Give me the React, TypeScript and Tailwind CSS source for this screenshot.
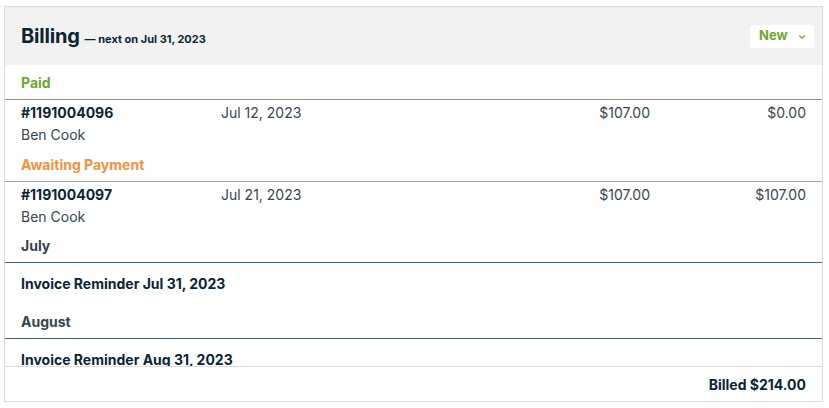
import { ChevronDown } from 'lucide-react';

interface Invoice {
  number: string;
  customer: string;
  date: string;
  amount: string;
  balance: string;
}

const paid: Invoice[] = [
  { number: '#1191004096', customer: 'Ben Cook', date: 'Jul 12, 2023', amount: '$107.00', balance: '$0.00' },
];

const awaiting: Invoice[] = [
  { number: '#1191004097', customer: 'Ben Cook', date: 'Jul 21, 2023', amount: '$107.00', balance: '$107.00' },
];

function InvoiceRow({ inv }: { inv: Invoice }) {
  return (
    <div className="grid grid-cols-[200px_1fr_120px_156px] px-4 pt-[2px] text-[14px] leading-[22px]">
      <div>
        <div className="font-bold text-[#0b2534]">{inv.number}</div>
        <div className="text-[#36454f]">{inv.customer}</div>
      </div>
      <div className="text-[#36454f]">{inv.date}</div>
      <div className="text-right text-[#36454f]">{inv.amount}</div>
      <div className="text-right text-[#36454f]">{inv.balance}</div>
    </div>
  );
}

function GroupLabel({ label, tone }: { label: string; tone: 'green' | 'orange' | 'slate' }) {
  const styles = {
    green: 'text-[#6ea72f] border-[#7aa83f]',
    orange: 'text-[#f2913d] border-[#ee9140]',
    slate: 'text-[#37444d] border-[#4f5f6a]',
  }[tone];
  return (
    <div className={`px-4 pt-[8px] pb-[6px] text-[14px] leading-5 font-bold border-b ${styles}`}>
      {label}
    </div>
  );
}

function Reminder({ label }: { label: string }) {
  return (
    <div className="px-4 pt-[11px] pb-[10px] text-[14px] leading-5 font-bold text-[#0b2534]">{label}</div>
  );
}

export default function App() {
  return (
    <div className="pt-[6px] pl-[4px] pr-[6px] bg-white" style={{ fontFamily: 'Inter, "Noto Sans", sans-serif' }}>
      <div className="h-[396px] border border-[#dcdcdc] flex flex-col bg-white">
        {/* Header */}
        <div className="h-[58px] shrink-0 bg-[#f2f2f2] flex items-center justify-between pl-4 pr-2">
          <div className="flex items-baseline gap-[5px] text-[#0b2534]">
            <span className="text-[20px] font-bold tracking-[-0.2px]">Billing</span>
            <span className="text-[11px] font-bold">— next on Jul 31, 2023</span>
          </div>
          <button className="w-[64px] h-[23px] bg-white rounded-[3px] flex items-center pl-[9px] gap-[9px] text-[13px] font-bold text-[#6ea72f]">
            New
            <ChevronDown size={10} strokeWidth={2.75} className="text-[#6ea72f] mt-[1px]" />
          </button>
        </div>

        {/* Body */}
        <div className="flex-1 overflow-hidden">
          <GroupLabel label="Paid" tone="green" />
          {paid.map((inv) => (
            <InvoiceRow key={inv.number} inv={inv} />
          ))}
          <div className="h-[1px]" />
          <GroupLabel label="Awaiting Payment" tone="orange" />
          {awaiting.map((inv) => (
            <InvoiceRow key={inv.number} inv={inv} />
          ))}
          <GroupLabel label="July" tone="slate" />
          <Reminder label="Invoice Reminder Jul 31, 2023" />
          <GroupLabel label="August" tone="slate" />
          <Reminder label="Invoice Reminder Aug 31, 2023" />
        </div>

        {/* Footer */}
        <div className="h-[35px] shrink-0 border-t border-[#dcdcdc] flex items-center justify-end px-4">
          <span className="text-[14px] font-bold text-[#0b2534]">Billed $214.00</span>
        </div>
      </div>
    </div>
  );
}
